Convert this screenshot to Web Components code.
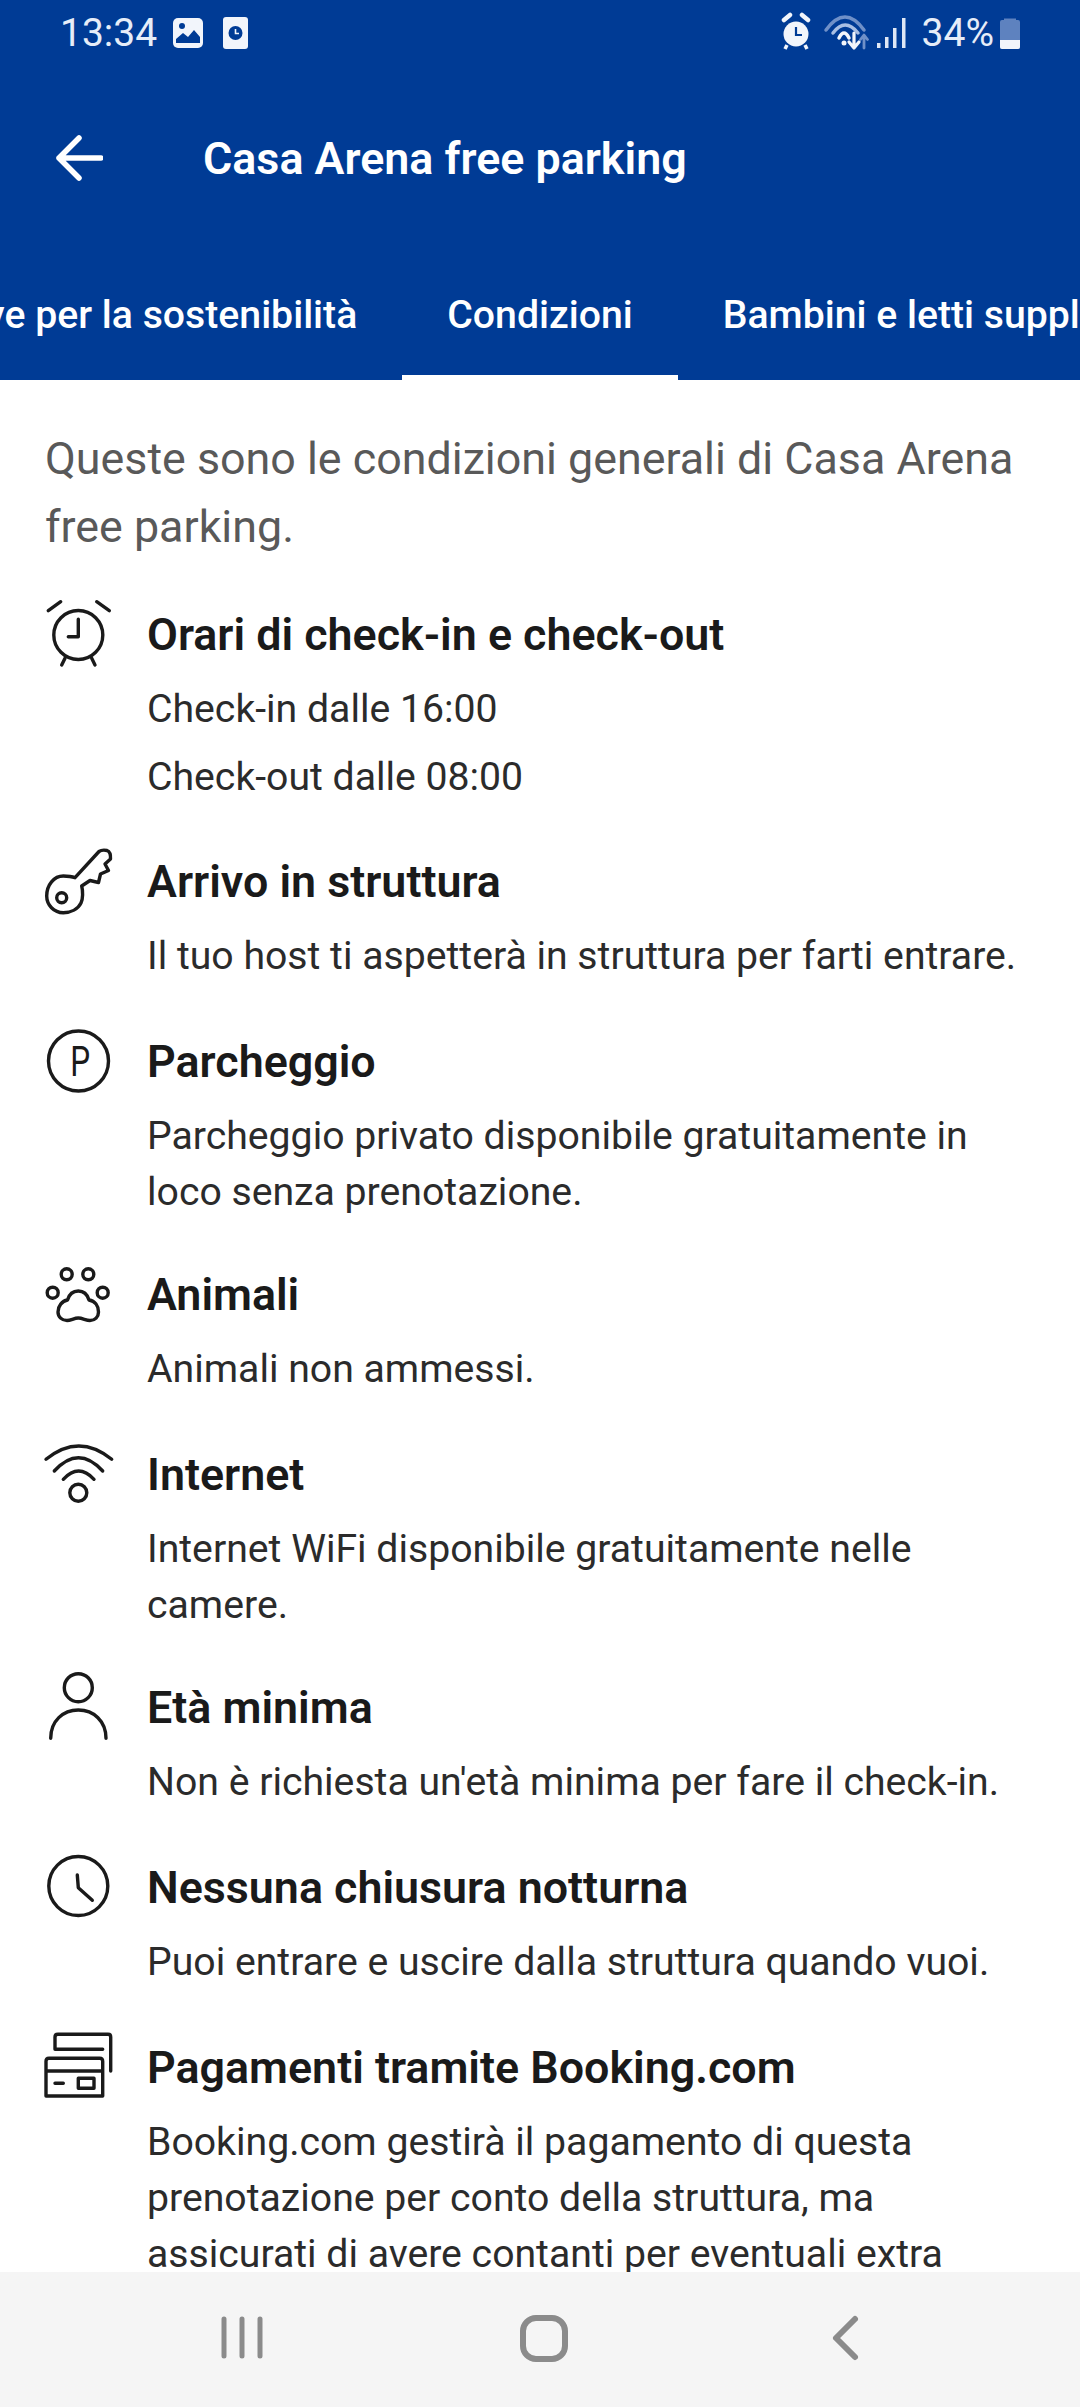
<!DOCTYPE html>
<html lang="it"><head><meta charset="utf-8"><title>Casa Arena free parking</title>
<style>
html,body{margin:0;padding:0;background:#fff}
body{font-family:Roboto,"Liberation Sans",sans-serif}
app-screen{height:2407px}
svg.i{width:68px;height:68px;display:block;fill:none;stroke:#1a1a1a;stroke-width:3.4;stroke-linecap:round;stroke-linejoin:round;overflow:visible}
</style></head><body>
<template id="t-screen"><style>:host{display:flex;flex-direction:column;width:1080px;overflow:hidden}
main{flex:1;min-height:0;overflow:hidden;padding:45px 45px 0;display:flex;flex-direction:column;gap:47px}
.intro{font-size:44.8px;line-height:67.5px;color:#595959;margin:0;flex:none}</style>
<slot name="head"></slot><main><p class="intro"><slot name="intro"></slot></p><slot></slot></main><slot name="nav"></slot></template>

<template id="t-status"><style>:host{display:flex;align-items:center;justify-content:space-between;height:66px;padding:0 59px 0 60px;color:#e6edf8;font-size:39px}
.g{display:flex;align-items:center}svg{display:block}</style>
<div class="g" style="gap:16px"><span>13:34</span><svg width="75" height="33" viewBox="0 0 75 33"><rect x="0" y="1" width="30" height="30" rx="5" fill="#f2f5fb"/><circle cx="9" cy="9" r="3" fill="#003b95"/><path d="M3 26 L3 22 L10 16 L15 20 L21 13 L27 20 L27 26Z" fill="#003b95"/><rect x="50" y="0" width="25" height="32" rx="3" fill="#f2f5fb"/><circle cx="62.500" cy="16" r="7" fill="#003b95"/><path d="M62.500 12V16.500H66" stroke="#f2f5fb" stroke-width="1.600" fill="none"/></svg></div>
<div class="g"><svg width="88" height="50" viewBox="0 0 88 50" style="margin-right:8px"><circle cx="15" cy="26" r="12.500" fill="#f2f5fb"/><path d="M15 19V27H21" stroke="#003b95" stroke-width="2.200" fill="none"/><path d="M3 12 L9 7 M21 7 L27 12" stroke="#f2f5fb" stroke-width="4.500" stroke-linecap="round"/><path d="M6 37 L4 41 M24 37 L26 41" stroke="#f2f5fb" stroke-width="3.500"/><g fill="none" stroke-linecap="round" stroke-linejoin="round"><path d="M45 22Q64 -4 83 22" stroke="#6f90c8" stroke-width="3.500"/><path d="M52 25Q64 9 77 25" stroke="#a9bfe3" stroke-width="3.500"/><path d="M58 30Q63 20 68 30" stroke="#f2f5fb" stroke-width="3.500"/><circle cx="63" cy="35" r="2.500" fill="#f2f5fb"/><path d="M73 25V39M68 34L73 40L78 34" stroke="#f2f5fb" stroke-width="3.200"/><path d="M83 40V28M79.500 31.500L83 27L86.500 31.500" stroke="#6f90c8" stroke-width="2.800"/></g></svg>
<svg width="30" height="32" viewBox="0 0 30 32" style="margin-right:15px"><g fill="#dfe7f5"><rect x="0" y="26" width="3.500" height="5"/><rect x="8" y="20" width="3.500" height="11"/><rect x="16" y="11" width="3.500" height="20"/><rect x="25" y="1" width="3.500" height="30"/></g></svg>
<span>34%</span><svg width="22" height="32" viewBox="0 0 22 32" style="margin-left:5px"><path d="M5 3V1.500H17V3H19Q21 3 21 5V30Q21 32 19 32H3Q1 32 1 30V5Q1 3 3 3Z" fill="#5e82bf"/><path d="M1 23H21V30Q21 32 19 32H3Q1 32 1 30Z" fill="#f2f5fb"/></svg></div></template>

<template id="t-toolbar"><style>:host{display:flex;align-items:center;height:184px;padding-left:56px;color:#fff;font-size:44.8px;font-weight:600}
svg{display:block;margin-right:100px;flex:none}</style>
<svg width="47" height="46" viewBox="0 0 47 46" fill="none" stroke="#fff" stroke-width="5.500" stroke-linecap="round" stroke-linejoin="round"><path d="M45 23H3M23 3L3 23L23 43"/></svg><slot></slot></template>

<template id="t-tabs"><style>:host{display:grid;grid-template-columns:1fr auto 1fr;height:130px;overflow:hidden;white-space:nowrap}</style><slot></slot></template>

<template id="t-tab"><style>:host{display:flex;align-items:center;padding:4px 45px 0;color:#fff;font-size:39.2px;font-weight:500;overflow:hidden;box-sizing:border-box;min-width:0;border-bottom:5px solid transparent}
:host([active]){border-bottom-color:#fff}
:host([side=left]){justify-content:flex-end}
:host([side=right]){justify-content:flex-start;padding-right:0}
:host([side=left]){padding-left:0}</style><slot></slot></template>

<template id="t-item"><style>:host{display:grid;flex:none;grid-template-columns:102px 1fr;align-content:start;min-height:133px;color:#2b2b2b;font-size:39.2px;line-height:56px}
.ic{grid-row:1;height:56px}
h3{grid-column:2;margin:0 0 18px;font-size:44.8px;line-height:56px;font-weight:600;color:#1a1a1a}
.b{grid-column:2;display:flex;flex-direction:column;gap:12px}</style>
<div class="ic"><slot name="icon"></slot></div><h3 id="h"></h3><div class="b"><slot></slot></div></template>

<template id="t-nav"><style>:host{display:flex;flex:none;height:135px;background:#f5f5f5}svg{display:block}</style>
<svg width="1080" height="135" viewBox="0 0 1080 135" fill="none" stroke="#8b8b8b" stroke-linecap="round" stroke-linejoin="round"><path d="M224 47V84M242 47V84M260 47V84" stroke-width="5"/><rect x="523" y="46" width="42" height="41" rx="13" stroke-width="6"/><path d="M855 47L836 66L855 85" stroke-width="6"/></svg></template>

<app-screen>
<app-head slot="head">
<status-bar></status-bar>
<app-toolbar>Casa Arena free parking</app-toolbar>
<tab-row><tab-item side="left">Iniziative per la sostenibilità</tab-item><tab-item active>Condizioni</tab-item><tab-item side="right">Bambini e letti supplementari</tab-item></tab-row>
</app-head>
<span slot="intro">Queste sono le condizioni generali di Casa Arena free parking.</span>

<info-item style="margin-bottom:2px" heading="Orari di check-in e check-out"><svg slot="icon" class="i" style="margin-top:-7px" viewBox="0 0 68 68"><circle cx="33.300" cy="35" r="24.500"/><path d="M33.300 19.300V36.700H23.300M3.300 10.700L15.700 1.700M51.700 1.700L64.300 10.700M20 58.300L16.700 65M46.700 58.300L50 65"/></svg><div>Check-in dalle 16:00</div><div>Check-out dalle 08:00</div></info-item>

<info-item heading="Arrivo in struttura"><svg slot="icon" class="i" style="margin-top:-5px" viewBox="0 0 68 68"><path d="M30 28.700L54 2.500Q57 .5 62 1.500Q66 3 65.500 10L60 15L63.500 21.500L55.500 25L53.500 33.500L45 31.500L36.700 37C38 42 38 50 36 54C33 60 26 63.700 18.300 63.700C9 63.700 1.700 56 1.700 47C1.700 36 9 27 18.300 27C23 27 27 27.500 30 28.700Z"/><circle cx="16.700" cy="48.700" r="5"/></svg><div>Il tuo host ti aspetterà in struttura per farti entrare.</div></info-item>

<info-item heading="Parcheggio"><svg slot="icon" class="i" style="margin-top:-5px" viewBox="0 0 68 68"><circle cx="33.500" cy="32" r="30"/><text transform="translate(25.200 47) scale(.75 1)" font-family="Roboto,sans-serif" font-size="42" fill="#1a1a1a" stroke="none">P</text></svg><div>Parcheggio privato disponibile gratuitamente in loco senza prenotazione.</div></info-item>

<info-item heading="Animali"><svg slot="icon" class="i" style="margin-top:-5px" viewBox="0 0 68 68"><circle cx="21.700" cy="12.300" r="5.500"/><circle cx="43.300" cy="12.300" r="5.500"/><circle cx="7.700" cy="30.700" r="5.500"/><circle cx="57.700" cy="30.700" r="5.500"/><path d="M33.300 29C27 29 24 33 22.500 38C17 39 13 44 13 50C13 55 17 58.500 22 58.500C26 58.500 29 56 33.300 56C37.500 56 41 58.500 45 58.500C50 58.500 53.500 55 53.500 50C53.500 44 50 39 44 38C42.500 33 39 29 33.300 29Z"/></svg><div>Animali non ammessi.</div></info-item>

<info-item heading="Internet"><svg slot="icon" class="i" style="margin-top:-6px" viewBox="0 0 68 68"><path d="M1 18.300Q33.800 -8.300 66.700 18.300M9.300 30Q33.500 3.400 57.700 30M18.300 38.300Q33.600 21.700 49 38.300"/><circle cx="33.300" cy="51.700" r="8.500"/></svg><div>Internet WiFi disponibile gratuitamente nelle camere.</div></info-item>

<info-item heading="Età minima"><svg slot="icon" class="i" style="margin-top:-7px" viewBox="0 0 68 68"><circle cx="33.300" cy="14.700" r="14"/><path d="M5.700 65.300C5.700 48 18 37 33.300 37C48.700 37 61 48 61 65.300"/></svg><div>Non è richiesta un'età minima per fare il check-in.</div></info-item>

<info-item heading="Nessuna chiusura notturna"><svg slot="icon" class="i" style="margin-top:-6px" viewBox="0 0 68 68"><circle cx="33.300" cy="32" r="29.500"/><path d="M32.300 21L33.300 33.700L47.300 46.300"/></svg><div>Puoi entrare e uscire dalla struttura quando vuoi.</div></info-item>

<info-item heading="Pagamenti tramite Booking.com"><svg slot="icon" class="i" style="margin-top:-7px" viewBox="0 0 68 68"><path d="M10 16.300V4Q10 1.300 13 1.300H63Q65.700 1.300 65.700 4V38M10 16.300H57.700"/><path d="M4 25.300H54.700Q57.700 25.300 57.700 28.300V63H1V28.300Q1 25.300 4 25.300ZM1 38H57.700M10 50.300H18.300"/><rect x="33.300" y="45.300" width="15.700" height="10"/></svg><div>Booking.com gestirà il pagamento di questa prenotazione per conto della struttura, ma assicurati di avere contanti per eventuali extra</div></info-item>

<nav-bar slot="nav"></nav-bar>
</app-screen>
<script>
function def(name,tid,extra){customElements.define(name,class extends HTMLElement{constructor(){super();this.attachShadow({mode:'open'}).appendChild(document.getElementById(tid).content.cloneNode(true));if(extra)extra(this)}})}
def('app-screen','t-screen');
customElements.define('app-head',class extends HTMLElement{constructor(){super();this.attachShadow({mode:'open'}).innerHTML='<style>:host{display:block;flex:none;background:#003b95;height:380px}</style><slot></slot>'}});
def('status-bar','t-status');def('app-toolbar','t-toolbar');def('tab-row','t-tabs');def('tab-item','t-tab');def('nav-bar','t-nav');
def('info-item','t-item',function(e){e.shadowRoot.getElementById('h').textContent=e.getAttribute('heading')});
</script>
</body></html>
